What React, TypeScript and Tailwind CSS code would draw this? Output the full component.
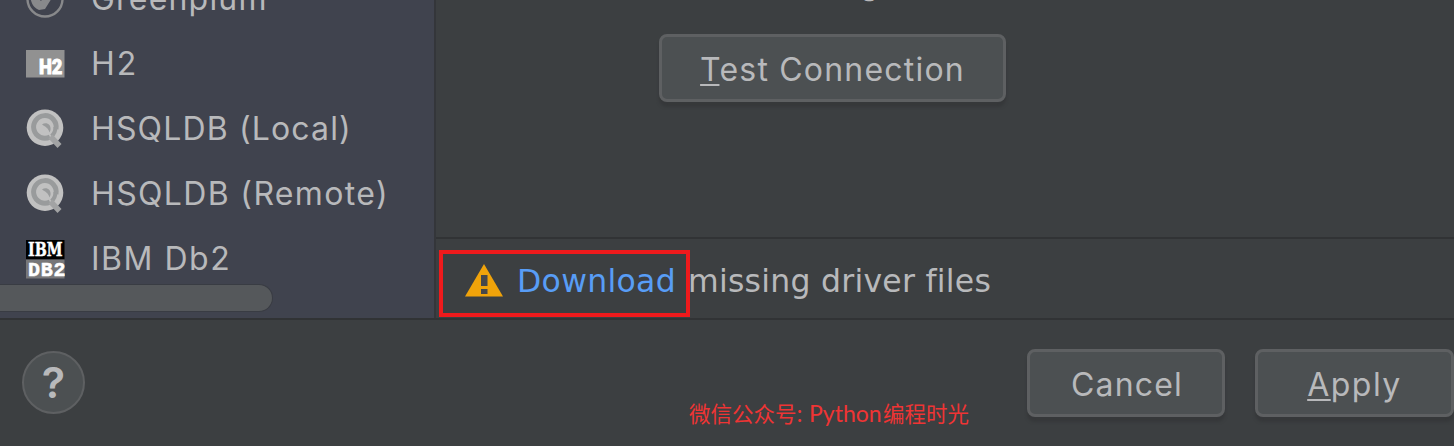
import type { ReactNode } from "react";

function GreenplumIcon() {
  return (
    <svg width="40" height="40" viewBox="0 0 40 40" fill="none">
      <circle cx="20" cy="20" r="17.500" stroke="#88898b" strokeWidth="2.400" />
      <path d="M5 16l5 0 6 6L29 5l6 1L20 30l-6 1C9 29 6 25 5 16z" fill="#88898b" />
    </svg>
  );
}

function H2Icon() {
  return (
    <svg width="40" height="40" viewBox="0 0 40 40">
      <rect x="1" y="6" width="38.500" height="27.500" fill="#919191" />
      <text x="14" y="30" fontFamily="Roboto" fontSize="20.500" fontWeight="900" fill="#fff" stroke="#fff" strokeWidth="0.800" textLength="23.500" lengthAdjust="spacingAndGlyphs">H2</text>
    </svg>
  );
}

function HsqldbIcon() {
  return (
    <svg width="40" height="40" viewBox="0 0 40 40" fill="none">
      <circle cx="20" cy="18.700" r="18.300" fill="#c1c1c1" />
      <path d="M25 28A11.300 11.300 0 1 1 31 20" stroke="#999b9c" strokeWidth="5" />
      <path d="M17 15.500c4-3 9.500 0 8.500 5.500l-1 2.500c-1-4-3.500-5.500-7.500-8z" fill="#999b9c" />
      <path d="M30.500 18q0 6-4 9" stroke="#999b9c" strokeWidth="4" />
      <path d="M25.500 27.500l9 9.500" stroke="#a2a3a4" strokeWidth="5.500" />
    </svg>
  );
}

function Db2Icon() {
  return (
    <svg width="40" height="40" viewBox="0 0 40 40">
      <rect x="1" y="1" width="38.500" height="19.500" fill="#000" />
      <rect x="1" y="20.500" width="38.500" height="19" fill="#777779" />
      <g fontWeight="700" fill="#fff" stroke="#fff" strokeWidth="0.500">
        <text x="3" y="17.300" fontFamily="DejaVu Serif" fontSize="18" textLength="34.500" lengthAdjust="spacingAndGlyphs">IBM</text>
        <text x="3" y="36.500" fontFamily="Liberation Mono" fontSize="20" letterSpacing="0.8">DB2</text>
      </g>
    </svg>
  );
}

function WarningIcon() {
  return (
    <svg width="38" height="34" viewBox="0 0 38 34">
      <path d="M19 0l19 32.500H0z" fill="#f0a30a" />
      <path d="M16 11h6.500v11H16zM16 25h6.500v5H16z" fill="#46474a" />
    </svg>
  );
}

function DriverRow({ icon, label, spacing }: { icon: ReactNode; label: string; spacing: string }) {
  return (
    <li className="flex h-[65px] shrink-0 items-center gap-[26px] pl-[25px]">
      {icon}
      <span className={`whitespace-nowrap text-[32px] leading-10 ${spacing}`}>{label}</span>
    </li>
  );
}

function Button({ children, className }: { children: ReactNode; className: string }) {
  return (
    <button className={`flex h-[68px] shrink-0 items-center justify-center rounded-lg border-[3px] border-[#5e6062] bg-[#4c5052] pt-1 text-[32px] leading-10 shadow-[0_5px_3px_#36383a] ${className}`}>
      <span className="whitespace-nowrap">{children}</span>
    </button>
  );
}

export default function App() {
  return (
    <div className="flex h-[446px] w-[1454px] flex-col overflow-hidden bg-[#3c3f41] font-['Inter',sans-serif] text-[#b8b9bb]">
      <div className="flex h-[320px] shrink-0 border-b-2 border-[#313335]">
        <aside className="relative w-[436px] shrink-0 overflow-hidden border-r-2 border-[#34363a] bg-[#40434e]">
          <ul className="-mt-[34px] flex flex-col">
            <DriverRow icon={<GreenplumIcon />} label="Greenplum" spacing="tracking-[1.2px]" />
            <DriverRow icon={<H2Icon />} label="H2" spacing="tracking-[2px]" />
            <DriverRow icon={<HsqldbIcon />} label="HSQLDB (Local)" spacing="tracking-[1.15px]" />
            <DriverRow icon={<HsqldbIcon />} label="HSQLDB (Remote)" spacing="tracking-[1.35px]" />
            <DriverRow icon={<Db2Icon />} label="IBM Db2" spacing="tracking-[1.5px]" />
          </ul>
          <div className="absolute top-[284px] left-0 h-7 w-[273px] rounded-r-full border border-l-0 border-[#393c43] bg-[#55585b]" />
        </aside>
        <main className="flex min-w-0 flex-1 flex-col">
          <div className="relative flex h-[237px] shrink-0 items-start overflow-hidden pt-[34px] pl-[223px]">
            <span className="absolute -top-[31px] left-[424px] text-[30px] leading-[30px]">g</span>
            <Button className="w-[347px] tracking-[1.2px]">
              <span className="underline decoration-2 underline-offset-[3px] [text-decoration-skip-ink:none]">T</span>est Connection
            </Button>
          </div>
          <div className="relative flex flex-1 items-center border-t-2 border-[#313335] pl-[29px] pt-1 font-['DejaVu_Sans',sans-serif] text-[31.500px] leading-10">
            <WarningIcon />
            <span className="ml-[14px] w-[171px] whitespace-nowrap tracking-[0.3px] text-[#589df6]">Download</span>
            <span className="whitespace-nowrap tracking-[0.25px]">missing driver files</span>
            <div className="absolute top-[11px] left-[3px] h-[67px] w-[251px] border-4 border-[#ef1a1c]" />
          </div>
        </main>
      </div>
      <footer className="flex flex-1 items-start">
        <button className="mt-[31px] ml-[22px] flex size-[63px] shrink-0 items-center justify-center rounded-full border-2 border-[#5e6062] bg-[#4c5052] text-[43px] font-semibold leading-none">
          ?
        </button>
        <p className="mt-[79px] ml-[604px] flex w-[338px] shrink-0 items-center whitespace-nowrap text-[21.500px] leading-7 text-[#ef3434]">
          <span className="w-[120px] font-['Noto_Sans_CJK_SC',sans-serif]">微信公众号:</span>
          <span className="w-[74px] font-['Lato',sans-serif] text-[23px]">Python</span>
          <span className="font-['Noto_Sans_CJK_SC',sans-serif]">编程时光</span>
        </p>
        <Button className="mt-[29px] w-[198px] pl-[2px] tracking-[1.2px]">Cancel</Button>
        <Button className="mt-[29px] ml-[30px] w-[199px] tracking-[1.5px]">
          <span className="underline decoration-2 underline-offset-[3px] [text-decoration-skip-ink:none]">A</span>pply
        </Button>
      </footer>
    </div>
  );
}
